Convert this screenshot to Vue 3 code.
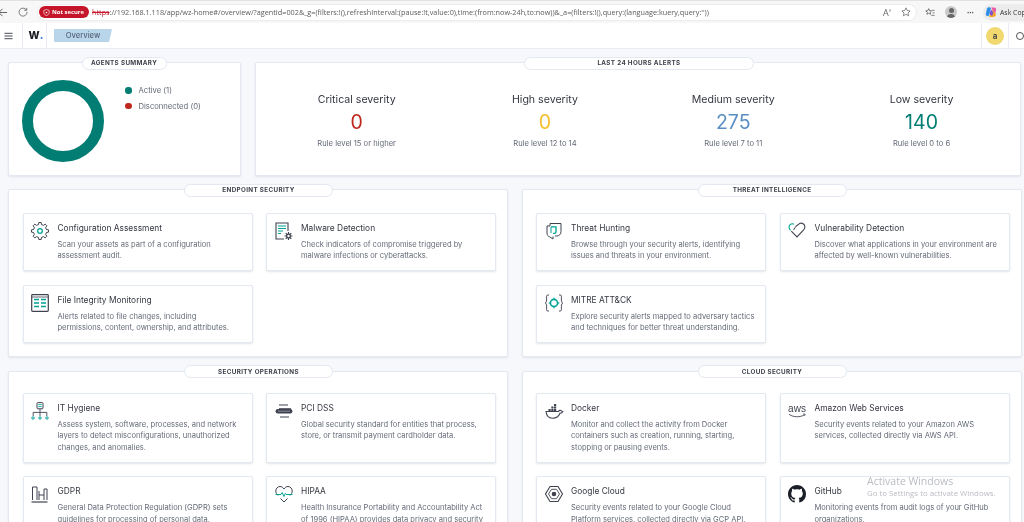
<script setup>
function gear(cx, cy, r1, r2, n) {
  let d = ''
  const step = (Math.PI * 2) / n
  for (let i = 0; i < n; i++) {
    const a = i * step - Math.PI / 2
    const pts = [
      [r1, a - step * 0.3],
      [r2, a - step * 0.17],
      [r2, a + step * 0.17],
      [r1, a + step * 0.3]
    ]
    pts.forEach(([r, t], j) => {
      d += (i === 0 && j === 0 ? 'M' : 'L') + (cx + r * Math.cos(t)).toFixed(2) + ' ' + (cy + r * Math.sin(t)).toFixed(2)
    })
  }
  return d + 'Z'
}
const D = '#3f4350'
const T = '#00a295'
const icons = {
  config: `<path d="${gear(9, 9, 6.6, 8.6, 8)}" fill="none" stroke="${D}" stroke-width="1"/><circle cx="9" cy="9" r="2.3" fill="none" stroke="${T}" stroke-width="1.3"/>`,
  malware: `<path d="M13 9V1H1v16h8" fill="none" stroke="${D}" stroke-width="1.1"/><path d="M3 4h8M3 6.5h8M3 9h5M3 11.5h3" stroke="${T}" stroke-width="1.1"/><path d="${gear(13.5, 14, 2.5, 4, 8)}" fill="${D}"/><circle cx="13.5" cy="14" r="1.2" fill="#fff"/>`,
  fim: `<rect x="0.7" y="0.7" width="16.6" height="16.6" rx="0.8" fill="none" stroke="${D}" stroke-width="1.2"/><path d="M1 3h16" stroke="${D}" stroke-width="0.8"/><path d="M3 5.5h5M10 5.5h5M3 9h5M10 9h5M3 12.5h5M10 12.5h5" stroke="${T}" stroke-width="1.3"/>`,
  hunt: `<path d="M5 4V1.5h11v8c0 3-2 4.5-4.500 4.500H10" fill="none" stroke="${D}" stroke-width="1"/><path d="M5 4H2v7c0 2 1 3.400 2.600 3.800L8 17v-2.500" fill="none" stroke="${D}" stroke-width="1"/><path d="M6 4.800h5v5c0 1-.6 1.600-1.600 1.600H8" fill="none" stroke="${T}" stroke-width="1.300"/><path d="M6 5v6" stroke="${T}" stroke-width="1"/>`,
  vuln: `<path d="M6 2.200C3.500.8 1 2.600 1 5c0 1.400.7 2.400 1.600 3.300" fill="none" stroke="${T}" stroke-width="1.100"/><path d="M8 4.200 11.500 1.600c2.600-1.400 5.400.6 5.400 3.400 0 1.300-.6 2.300-1.500 3.200L9 15 3.300 9.200" fill="none" stroke="${D}" stroke-width="1.100"/><path d="M8 4.200 5.500 8" stroke="${D}" stroke-width="1"/>`,
  mitre: `<path d="M4 1H2.800C2 1 1.600 1.500 1.600 2.200V7L.5 9l1.100 2v4.800c0 .7.4 1.200 1.200 1.200H4M14 1h1.200c.8 0 1.200.5 1.200 1.200V7l1.100 2-1.100 2v4.800c0 .7-.4 1.200-1.200 1.200H14" fill="none" stroke="${D}" stroke-width="0.900"/><circle cx="9" cy="9" r="3.600" fill="none" stroke="${T}" stroke-width="1.600"/><path d="M9 3.600v2M9 12.400v2M3.600 9h2M12.400 9h2" stroke="${T}" stroke-width="1"/>`,
  hygiene: `<rect x="6" y="0.6" width="6" height="6.2" rx="0.8" fill="none" stroke="${D}" stroke-width="1"/><path d="M7.300 2.600h3.400M7.300 4.600h3.400" stroke="${T}" stroke-width="0.900"/><path d="M9 7v3.200M2.200 14v-3.600h13.600V14M9 10.200V14" fill="none" stroke="${D}" stroke-width="0.900"/><circle cx="2" cy="16" r="1.200" fill="none" stroke="${T}"/><circle cx="9" cy="16" r="1.200" fill="none" stroke="${T}"/><circle cx="16" cy="16" r="1.200" fill="none" stroke="${T}"/>`,
  pci: `<path d="M4 3h9M5 15h9" stroke="${D}" stroke-width="1"/><path d="M4 6.500h12" stroke="${D}" stroke-width="0.800"/><rect x="0.6" y="7" width="16.800" height="4.400" rx="2.200" fill="${D}"/><path d="M3 9.200h12" stroke="#aab" stroke-width="0.700"/>`,
  gdpr: `<path d="M.5 17h16" stroke="${D}" stroke-width="1.200"/><path d="M1.500 15V2h4.500v13M8 15V6M8 10h5M13 15V4h3v11" fill="none" stroke="${D}" stroke-width="1"/>`,
  hipaa: `<path d="M3 10.500C1.500 9 .8 7.800.8 6 .8 3.500 2.700 1.500 5 1.500 6.800 1.500 8 2.500 9 4c1-1.500 2.200-2.500 4-2.500 2.300 0 4.200 2 4.200 4.500 0 1.800-.7 3-2.200 4.500" fill="none" stroke="${D}" stroke-width="1"/><path d="M.5 9.500H6l1.300-2 1.500 4 1.500-3 .8 1h6.400" fill="none" stroke="${T}" stroke-width="1"/><path d="M5.500 13.500 9 17l3.500-3.500" fill="none" stroke="${D}" stroke-width="1"/>`,
  docker: `<path d="M1 9.500h12.500c.4-1.200 2-1.500 3-.6.5.3 1 .6 1.300.6-.5 1.300-1.600 1.800-2.800 1.700-1.200 3-3.800 5-7.500 5-3.800 0-6-2.500-6.500-6.700Z" fill="none" stroke="${D}" stroke-width="1.100"/><path d="M3.500 7h2.200v2H3.500zM6.300 7h2.200v2H6.300zM9 7h2.200v2H9zM6.300 4.500h2.200v2H6.300zM9 4.500h2.200v2H9zM9 2h2.200v2H9z" fill="${D}"/>`,
  aws: `<text x="9" y="10" text-anchor="middle" font-family="Liberation Sans, sans-serif" font-size="10" fill="${D}">aws</text><path d="M1 12.300c4.500 3.200 11 3.200 15.500.5" fill="none" stroke="${D}" stroke-width="0.900"/><path d="M15 12h2.200l-.6 2" fill="none" stroke="${D}" stroke-width="0.700"/>`,
  gcloud: `<path d="M5 1.500h8L17.500 9 13 16.500H5L.5 9Z" fill="none" stroke="${D}" stroke-width="1.100"/><path d="M6.500 4.300h5L14.500 9l-3 4.700h-5L3.500 9Z" fill="none" stroke="${D}" stroke-width="0.900"/><circle cx="9" cy="9" r="2.300" fill="${D}"/>`,
  github: `<path transform="scale(1.125)" fill="#1b1f27" d="M8 0C3.58 0 0 3.58 0 8c0 3.54 2.29 6.530 5.470 7.590.4.07.55-.17.55-.38 0-.19-.01-.82-.01-1.490-2.010.37-2.530-.49-2.690-.94-.09-.23-.48-.94-.82-1.130-.28-.15-.68-.52-.01-.53.63-.01 1.080.58 1.230.82.72 1.210 1.870.87 2.330.66.07-.52.28-.87.51-1.070-1.780-.2-3.640-.89-3.640-3.950 0-.87.31-1.590.82-2.150-.08-.2-.36-1.020.08-2.120 0 0 .67-.21 2.200.82.64-.18 1.320-.27 2-.27.68 0 1.360.09 2 .27 1.530-1.040 2.200-.82 2.200-.82.44 1.100.16 1.920.08 2.120.51.56.82 1.270.82 2.150 0 3.070-1.870 3.750-3.650 3.950.29.25.54.73.54 1.480 0 1.070-.01 1.930-.01 2.200 0 .21.15.46.55.38A8.013 8.013 0 0016 8c0-4.420-3.580-8-8-8z"/>`
}

const severities = [
  { title: 'Critical severity', value: '0', tone: 'critical', rule: 'Rule level 15 or higher' },
  { title: 'High severity', value: '0', tone: 'high', rule: 'Rule level 12 to 14' },
  { title: 'Medium severity', value: '275', tone: 'medium', rule: 'Rule level 7 to 11' },
  { title: 'Low severity', value: '140', tone: 'low', rule: 'Rule level 0 to 6' }
]

const rows = [
  {
    cls: 'row-a',
    sections: [
      {
        title: 'ENDPOINT SECURITY',
        cards: [
          { icon: 'config', title: 'Configuration Assessment', text: 'Scan your assets as part of a configuration\nassessment audit.' },
          { icon: 'malware', title: 'Malware Detection', text: 'Check indicators of compromise triggered by\nmalware infections or cyberattacks.' },
          { icon: 'fim', title: 'File Integrity Monitoring', text: 'Alerts related to file changes, including\npermissions, content, ownership, and attributes.' }
        ]
      },
      {
        title: 'THREAT INTELLIGENCE',
        cards: [
          { icon: 'hunt', title: 'Threat Hunting', text: 'Browse through your security alerts, identifying\nissues and threats in your environment.' },
          { icon: 'vuln', title: 'Vulnerability Detection', text: 'Discover what applications in your environment are\naffected by well-known vulnerabilities.' },
          { icon: 'mitre', title: 'MITRE ATT&CK', text: 'Explore security alerts mapped to adversary tactics\nand techniques for better threat understanding.' }
        ]
      }
    ]
  },
  {
    cls: 'row-b',
    sections: [
      {
        title: 'SECURITY OPERATIONS',
        cards: [
          { icon: 'hygiene', title: 'IT Hygiene', text: 'Assess system, software, processes, and network\nlayers to detect misconfigurations, unauthorized\nchanges, and anomalies.' },
          { icon: 'pci', title: 'PCI DSS', text: 'Global security standard for entities that process,\nstore, or transmit payment cardholder data.' },
          { icon: 'gdpr', title: 'GDPR', text: 'General Data Protection Regulation (GDPR) sets\nguidelines for processing of personal data.' },
          { icon: 'hipaa', title: 'HIPAA', text: 'Health Insurance Portability and Accountability Act\nof 1996 (HIPAA) provides data privacy and security' }
        ]
      },
      {
        title: 'CLOUD SECURITY',
        cards: [
          { icon: 'docker', title: 'Docker', text: 'Monitor and collect the activity from Docker\ncontainers such as creation, running, starting,\nstopping or pausing events.' },
          { icon: 'aws', title: 'Amazon Web Services', text: 'Security events related to your Amazon AWS\nservices, collected directly via AWS API.' },
          { icon: 'gcloud', title: 'Google Cloud', text: 'Security events related to your Google Cloud\nPlatform services, collected directly via GCP API.' },
          { icon: 'github', title: 'GitHub', text: 'Monitoring events from audit logs of your GitHub\norganizations.' }
        ]
      }
    ]
  }
]
const url = "://192.168.1.118/app/wz-home#/overview/?agentId=002&_g=(filters:!(),refreshInterval:(pause:!t,value:0),time:(from:now-24h,to:now))&_a=(filters:!(),query:(language:kuery,query:''))"
</script>

<template>
  <div class="app">
    <div class="browser">
      <svg class="nav-ico back" viewBox="0 0 12 12"><path d="M11 6H2M6 2 2 6l4 4" fill="none" stroke="#555" stroke-width="1"/></svg>
      <svg class="nav-ico reload" viewBox="0 0 12 12"><path d="M10 3.500A4.800 4.800 0 1 0 10.800 6M10.500 1v3H7.500" fill="none" stroke="#555" stroke-width="0.900"/></svg>
      <div class="address">
        <span class="secure">
          <svg class="secure-ico" viewBox="0 0 10 10"><path d="M5 .8 8.800 2v3c0 2.200-1.600 3.500-3.800 4.300C2.800 8.500 1.200 7.200 1.200 5V2Z" fill="none" stroke="#fff" stroke-width="0.900"/><circle cx="5" cy="5" r="1.200" fill="#fff"/></svg>
          Not secure
        </span>
        <span class="url"><s class="https">https</s>{{ url }}</span>
        <span class="addr-tools">
          <span class="read">A<sup>))</sup></span>
          <svg class="tool" viewBox="0 0 12 12"><path d="m6 1 1.500 3.300 3.500.4-2.600 2.400.7 3.500L6 8.800 2.900 10.600l.7-3.500L1 4.700l3.500-.4Z" fill="none" stroke="#555" stroke-width="0.800"/></svg>
        </span>
      </div>
      <svg class="tool fav" viewBox="0 0 12 12"><path d="m4.500 2 1 2.300 2.500.3-1.900 1.700.5 2.500-2.100-1.300-2.200 1.300.5-2.500L.9 4.600l2.600-.3ZM8.500 4h3M9 7h2.500M7.500 10h4" fill="none" stroke="#444" stroke-width="0.800"/></svg>
      <span class="profile"><span class="p-head"></span><span class="p-body"></span></span>
      <span class="dots">···</span>
      <span class="copilot">
        <svg class="co-ico" viewBox="0 0 12 12"><path d="M2 2.500C3 .8 5 1 6 2L4 9.500C2.500 11 .8 10 .8 8Z" fill="#2f8fe8"/><path d="M6 1.500h3c2 0 2.500 1.500 2 3L10 8 7 3Z" fill="#e85aa8"/><path d="M7 3.500 11 8c0 2-1.500 3-3 3H4Z" fill="#f5a623"/><path d="M4.500 8 6 3.500l2.500 3L7 10Z" fill="#7b4fd6"/></svg>
        <span class="co-text">Ask Cop</span>
      </span>
    </div>

    <header class="topbar">
      <svg class="burger" viewBox="0 0 10 8"><path d="M.5 1h9M.5 4h9M.5 7h9" stroke="#343741" stroke-width="1"/></svg>
      <div class="brand"><b>W</b><i>.</i></div>
      <div class="tab"><span>Overview</span></div>
      <div class="spacer"></div>
      <div class="user"><span class="avatar">a</span></div>
      <div class="help"><span class="help-ico"></span></div>
    </header>

    <main class="page">
      <div class="row-top">
        <section class="panel agents">
          <h2 class="pill pill-agents">AGENTS SUMMARY</h2>
          <div class="donut"></div>
          <ul class="legend">
            <li><span class="dot dot-on"></span>Active (1)</li>
            <li><span class="dot dot-off"></span>Disconnected (0)</li>
          </ul>
        </section>
        <section class="panel alerts">
          <h2 class="pill pill-alerts">LAST 24 HOURS ALERTS</h2>
          <div v-for="s in severities" :key="s.title" class="sev">
            <div class="sev-title">{{ s.title }}</div>
            <div class="sev-value" :class="s.tone">{{ s.value }}</div>
            <div class="sev-rule">{{ s.rule }}</div>
          </div>
        </section>
      </div>

      <div v-for="row in rows" :key="row.cls" class="row-two" :class="row.cls">
        <section v-for="sec in row.sections" :key="sec.title" class="panel group">
          <h2 class="pill pill-group">{{ sec.title }}</h2>
          <div class="cards">
            <article v-for="c in sec.cards" :key="c.title" class="card">
              <svg class="card-ico" viewBox="0 0 18 18" v-html="icons[c.icon]"></svg>
              <div class="card-body">
                <h3>{{ c.title }}</h3>
                <p>{{ c.text }}</p>
              </div>
            </article>
          </div>
        </section>
      </div>
    </main>

    <div class="watermark">
      <div class="wm1">Activate Windows</div>
      <div class="wm2">Go to Settings to activate Windows.</div>
    </div>
  </div>
</template>

<style>
html, body { margin: 0; overflow: hidden; background: #f7f8fc; }
</style>

<style scoped>
* { box-sizing: border-box; }
.app { position: relative; width: 1024px; height: 522px; overflow: hidden; background: #f7f8fc; font-family: Inter, "Noto Sans", sans-serif; color: #343741; filter: blur(0.4px); }

.browser { height: 23px; background: #f7f7f7; border-top: 1px solid #e2e2e2; display: flex; align-items: center; font-family: "Open Sans", sans-serif; }
.nav-ico { width: 11px; height: 11px; flex: none; }
.back { margin-left: -3px; }
.reload { margin-left: 10px; margin-right: 9px; width: 10px; height: 10px; }
.address { width: 880px; height: 17px; background: #fff; border: 1px solid #ececec; border-radius: 9px; display: flex; align-items: center; padding-left: 1px; flex: none; }
.secure { width: 50px; height: 12.5px; background: #c4152a; color: #fff; border-radius: 7px; font-size: 5.9px; font-weight: 700; display: flex; align-items: center; gap: 2.5px; padding-left: 3.5px; flex: none; white-space: nowrap; }
.secure-ico { width: 7px; height: 7px; flex: none; }
.url { margin-left: 3px; font-size: 7.27px; color: #5a5a5a; white-space: nowrap; flex: 1; overflow: hidden; }
.https { color: #c4152a; }
.addr-tools { display: flex; align-items: center; gap: 10px; padding-right: 5px; flex: none; }
.read { font-size: 9px; color: #666; line-height: 1; }
.read sup { font-size: 4px; }
.tool { width: 10px; height: 10px; flex: none; }
.fav { margin-left: 8px; }
.profile { position: relative; width: 12px; height: 12px; margin-left: 10px; border-radius: 50%; background: #c9c9c9; overflow: hidden; flex: none; }
.p-head { position: absolute; left: 3.5px; top: 2px; width: 5px; height: 5px; border-radius: 50%; background: #666; }
.p-body { position: absolute; left: 2px; top: 7.5px; width: 8px; height: 6px; border-radius: 4px 4px 0 0; background: #666; }
.dots { margin-left: 10px; width: 12px; font-size: 8px; font-weight: 700; color: #555; flex: none; }
.copilot { margin-left: 4px; height: 17px; flex: 1; min-width: 0; border-radius: 9px 0 0 9px; background: #ececec; display: flex; align-items: center; gap: 3px; padding-left: 2px; font-size: 6.9px; color: #333; white-space: nowrap; }
.co-ico { width: 12px; height: 12px; flex: none; }

.topbar { height: 26px; background: #fff; border-bottom: 1px solid #e9edf3; display: flex; align-items: center; }
.burger { width: 9px; height: 8px; margin-left: 4px; flex: none; }
.brand { margin-left: 9px; width: 25px; height: 25px; border-left: 1px solid #e9edf3; border-right: 1px solid #e9edf3; padding-left: 5.5px; display: flex; align-items: center; font-size: 10.5px; color: #1a1c21; flex: none; }
.brand b { font-weight: 800; }
.brand i { color: #3d7ef0; font-style: normal; font-weight: 800; }
.tab { margin-left: 7px; width: 58px; height: 13px; background: #b9d5ea; clip-path: polygon(0 0, 100% 0, 95% 100%, 0 100%); border-radius: 1px; display: flex; align-items: center; justify-content: center; font-size: 7.6px; font-weight: 500; color: #566579; }
.spacer { flex: 1; }
.user { width: 28px; height: 25px; border-left: 1px solid #e9edf3; border-right: 1px solid #e9edf3; display: flex; align-items: center; justify-content: center; }
.avatar { width: 18px; height: 18px; border-radius: 50%; background: #f1d86f; font-size: 8px; font-weight: 600; display: flex; align-items: center; justify-content: center; color: #343741; }
.help { width: 15px; padding-left: 7px; overflow: hidden; }
.help-ico { display: block; width: 8px; height: 8px; border: 1px solid #555; border-radius: 50%; }

.page { padding: 13px 3px 0 8px; }
.row-top { display: grid; grid-template-columns: 233px 766.5px; gap: 13.5px; }
.row-two { display: grid; grid-template-columns: 500px 500px; gap: 13.5px; }
.row-a { margin-top: 13px; }
.row-b { margin-top: 13.5px; }
.row-b .cards { padding-top: 21px; }

.panel { position: relative; background: #fff; border: 1px solid #e3e8f1; border-radius: 2px; box-shadow: 0 1px 2px rgba(90, 105, 130, .14); }
.pill { position: absolute; margin: 0; height: 13px; top: -6.5px; background: #fff; border: 1px solid #e3e8f1; border-radius: 7px; font-size: 6.3px; font-weight: 700; letter-spacing: .35px; color: #3c3f4a; display: flex; align-items: center; justify-content: center; white-space: nowrap; }
.pill-agents { left: 72.5px; width: 85px; }
.pill-alerts { left: 268.5px; width: 230px; }
.pill-group { left: 175px; width: 149px; }

.agents { height: 114px; }
.donut { position: absolute; left: 13px; top: 17px; width: 82px; height: 82px; border-radius: 50%; border: 11px solid #017d73; }
.legend { list-style: none; margin: 0; padding: 19.5px 0 0 116px; font-size: 7.65px; color: #646a77; }
.legend li { display: flex; align-items: center; height: 15.7px; white-space: nowrap; }
.dot { width: 6.5px; height: 6.5px; border-radius: 50%; margin-right: 7px; flex: none; }
.dot-on { background: #017d73; }
.dot-off { background: #bd271e; }

.alerts { height: 114px; display: grid; grid-template-columns: repeat(4, 188.3px); padding: 27.5px 0 0 7px; }
.sev { text-align: center; }
.sev-title { font-size: 10.6px; line-height: 18px; color: #343741; }
.sev-value { font-size: 19.5px; line-height: 26.5px; }
.sev-rule { font-size: 7.6px; line-height: 18px; color: #646a77; }
.critical { color: #bd271e; }
.high { color: #f5bf2c; }
.medium { color: #5b8fc2; }
.low { color: #017d73; }

.cards { display: grid; grid-template-columns: 230px 230px; gap: 13.5px; padding: 22.5px 13.5px 13px; }
.card { display: flex; background: #fff; border: 1px solid #e3e8f1; border-radius: 2px; box-shadow: 0 1px 2px rgba(90, 105, 130, .18); padding: 8px 4px 8.5px 7.5px; }
.card-ico { width: 18px; height: 18px; flex: none; margin-right: 8.5px; overflow: visible; }
.card-body { min-width: 0; }
.card-body h3 { margin: 0; font-size: 8.4px; line-height: 12px; font-weight: 400; color: #343741; white-space: nowrap; }
.card-body p { margin: 5px 0 0; font-size: 7.55px; line-height: 11.5px; color: #646a77; white-space: pre; }

.watermark { position: absolute; left: 867px; top: 474px; color: #b9bcc2; pointer-events: none; white-space: nowrap; font-family: "Open Sans", sans-serif; }
.wm1 { font-size: 10.5px; line-height: 14px; }
.wm2 { font-size: 7.85px; line-height: 11px; }
</style>
